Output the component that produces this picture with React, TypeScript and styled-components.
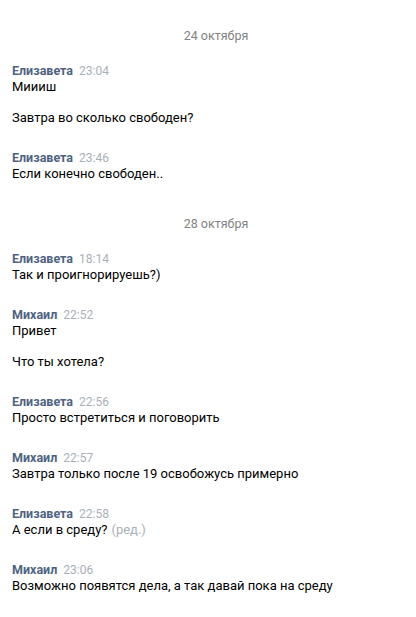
import React from "react";
import styled, { createGlobalStyle } from "styled-components";

const Global = createGlobalStyle`
  html, body { margin: 0; padding: 0; background: #ffffff; }
  body { font-family: Roboto, "Open Sans", "Liberation Sans", sans-serif; -webkit-font-smoothing: antialiased; }
`;

const Page = styled.div`
  width: 416px;
  min-height: 617px;
  background: #ffffff;
  box-sizing: border-box;
  padding: 27px 0 0 12px;
  display: flex;
  flex-direction: column;
`;

const DateRow = styled.div<{ $first?: boolean }>`
  display: flex;
  justify-content: center;
  padding-left: 4px;
  height: 17px;
  margin-top: ${(p) => (p.$first ? "0" : "11px")};
  margin-bottom: 17px;
  font-size: 12.5px;
  line-height: 17px;
  color: #828282;
`;

const Group = styled.div`
  display: flex;
  flex-direction: column;
  margin-bottom: 22px;
`;

const Header = styled.div`
  height: 17px;
  line-height: 17px;
  white-space: nowrap;
`;

const Name = styled.span`
  font-weight: 700;
  font-size: 12.5px;
  color: #4f6381;
  margin-right: 6px;
`;

const Time = styled.span`
  font-size: 12px;
  color: #a9b0b8;
`;

const Messages = styled.div`
  display: flex;
  flex-direction: column;
  gap: 14px;
`;

const Text = styled.div`
  height: 17px;
  font-size: 13px;
  line-height: 17px;
  color: #000000;
  white-space: nowrap;
`;

const Edited = styled.span`
  color: #a9b0b8;
  margin-left: 4px;
`;

type Msg = { text: string; edited?: boolean };
type G = { name: string; time: string; msgs: Msg[] };
type Day = { date: string; groups: G[] };

const days: Day[] = [
  {
    date: "24 октября",
    groups: [
      { name: "Елизавета", time: "23:04", msgs: [{ text: "Миииш" }, { text: "Завтра во сколько свободен?" }] },
      { name: "Елизавета", time: "23:46", msgs: [{ text: "Если конечно свободен.." }] },
    ],
  },
  {
    date: "28 октября",
    groups: [
      { name: "Елизавета", time: "18:14", msgs: [{ text: "Так и проигнорируешь?)" }] },
      { name: "Михаил", time: "22:52", msgs: [{ text: "Привет" }, { text: "Что ты хотела?" }] },
      { name: "Елизавета", time: "22:56", msgs: [{ text: "Просто встретиться и поговорить" }] },
      { name: "Михаил", time: "22:57", msgs: [{ text: "Завтра только после 19 освобожусь примерно" }] },
      { name: "Елизавета", time: "22:58", msgs: [{ text: "А если в среду?", edited: true }] },
      { name: "Михаил", time: "23:06", msgs: [{ text: "Возможно появятся дела, а так давай пока на среду" }] },
    ],
  },
];

export default function App() {
  return (
    <>
      <Global />
      <Page>
        {days.map((d, i) => (
          <React.Fragment key={d.date}>
            <DateRow $first={i === 0}>{d.date}</DateRow>
            {d.groups.map((g, j) => (
              <Group key={j}>
                <Header>
                  <Name>{g.name}</Name>
                  <Time>{g.time}</Time>
                </Header>
                <Messages>
                  {g.msgs.map((m, k) => (
                    <Text key={k}>
                      {m.text}
                      {m.edited && <Edited>(ред.)</Edited>}
                    </Text>
                  ))}
                </Messages>
              </Group>
            ))}
          </React.Fragment>
        ))}
      </Page>
    </>
  );
}
